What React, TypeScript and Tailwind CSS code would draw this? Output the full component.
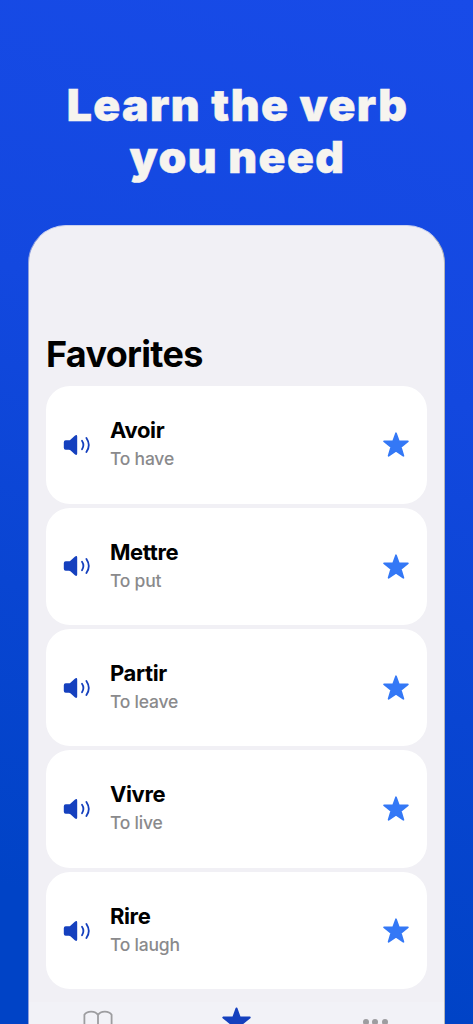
import React from 'react';

const verbs = [
  { name: 'Avoir', meaning: 'To have' },
  { name: 'Mettre', meaning: 'To put' },
  { name: 'Partir', meaning: 'To leave' },
  { name: 'Vivre', meaning: 'To live' },
  { name: 'Rire', meaning: 'To laugh' },
];

const StarIcon = ({ className }: { className: string }) => (
  <svg viewBox="0 0 26 25" className={className} fill="currentColor" stroke="currentColor" strokeWidth="1.7" strokeLinejoin="round">
    <path d="M13 1.2 L15.9 9.3 L24.9 9.4 L17.8 15.1 L20.4 23.8 L13 18.8 L5.6 23.8 L8.2 15.1 L1.1 9.4 L10.1 9.3 Z" />
  </svg>
);

const SpeakerIcon = () => (
  <svg viewBox="0 0 28 22" className="h-[22px] w-[28px] text-[#1540be]" fill="none" stroke="currentColor" strokeLinecap="round">
    <path
      d="M2.7 6.3 H6 Q6.8 6.3 7.4 5.8 L11.8 1.7 Q14.1 0.2 14.2 2.4 V19.6 Q14.1 21.8 11.8 20.3 L7.4 16.2 Q6.8 15.7 6 15.7 H2.7 Q0.8 15.7 0.8 13.8 V8.2 Q0.8 6.3 2.7 6.3 Z"
      fill="currentColor"
      stroke="none"
    />
    <path d="M19 6.8 Q21.8 11 19 15.2" strokeWidth="1.8" />
    <path d="M23.4 3.9 Q28.2 11 23.4 18.1" strokeWidth="1.8" />
  </svg>
);

const BookIcon = () => (
  <svg viewBox="0 0 30 24" className="h-[24px] w-[30px] text-[#9d9da0]" fill="none" stroke="currentColor" strokeWidth="1.8" strokeLinejoin="round">
    <path d="M15 5 C12.5 0.5 4 0.5 1.4 4.8 V22 C5 19 12 19 15 22 C18 19 25 19 28.6 22 V4.8 C26 0.5 17.5 0.5 15 5 Z M15 5 V22" />
  </svg>
);

const VerbCard = ({ name, meaning }: { name: string; meaning: string }) => (
  <div className="flex h-[117.4px] shrink-0 items-center rounded-[24px] bg-white pl-[17px] pr-[17.4px]">
    <SpeakerIcon />
    <div className="ml-[18.7px] flex-1">
      <h2 className="-mt-[1.6px] text-[22px] font-bold leading-[28px] tracking-[-0.35px] text-black">{name}</h2>
      <p className="-mb-px text-[17.5px] font-medium leading-[29px] tracking-[-0.2px] text-[#8a8a8c]">{meaning}</p>
    </div>
    <StarIcon className="mb-[0.6px] h-[25px] w-[26px] text-[#3478f6]" />
  </div>
);

const App = () => {
  return (
    <main className="flex h-[1024px] w-[473px] flex-col overflow-hidden bg-linear-[197deg,#184be8_0%,#1348df_35%,#0945d2_62%,#0043c6_88%,#0043c6_100%] font-['Inter','Liberation_Sans',sans-serif]">
      <h1 className="h-[225px] shrink-0 pl-[2px] pt-[80px] text-center text-[44.5px] font-black leading-[51.5px] tracking-[1.4px] text-[#f6f4ef] [-webkit-text-stroke:0.5px_#f6f4ef]">
        Learn the verb
        <br />
        you need
      </h1>

      {/* Phone screen */}
      <section className="ml-[28px] flex w-[417px] flex-1 flex-col overflow-hidden rounded-t-[38px] border-x border-t border-l-[#8f9fdc] border-r-[#b4b5b8] border-t-[#c9d0ee] bg-[#f1f0f5]">
        <h2 className="h-[160.3px] shrink-0 pl-[17px] pt-[106px] text-[36px] font-bold leading-[44px] tracking-[-0.7px] text-black">
          Favorites
        </h2>
        <div className="flex shrink-0 flex-col gap-[4px] px-[17.2px]">
          {verbs.map((verb) => (
            <VerbCard key={verb.name} name={verb.name} meaning={verb.meaning} />
          ))}
        </div>

        {/* Tab bar */}
        <nav className="mt-[12.4px] grid h-[60px] shrink-0 grid-cols-3 justify-items-center bg-[#f2f2f7] pt-[5px]">
          <div className="pt-[3px]">
            <BookIcon />
          </div>
          <StarIcon className="h-[28px] w-[29px] text-[#1540be]" />
          <div className="flex gap-[3.5px] pl-px pt-[12px]">
            <span className="size-[6px] rounded-full bg-[#9d9da0]" />
            <span className="size-[6px] rounded-full bg-[#9d9da0]" />
            <span className="size-[6px] rounded-full bg-[#9d9da0]" />
          </div>
        </nav>
      </section>
    </main>
  );
};

export default App;
